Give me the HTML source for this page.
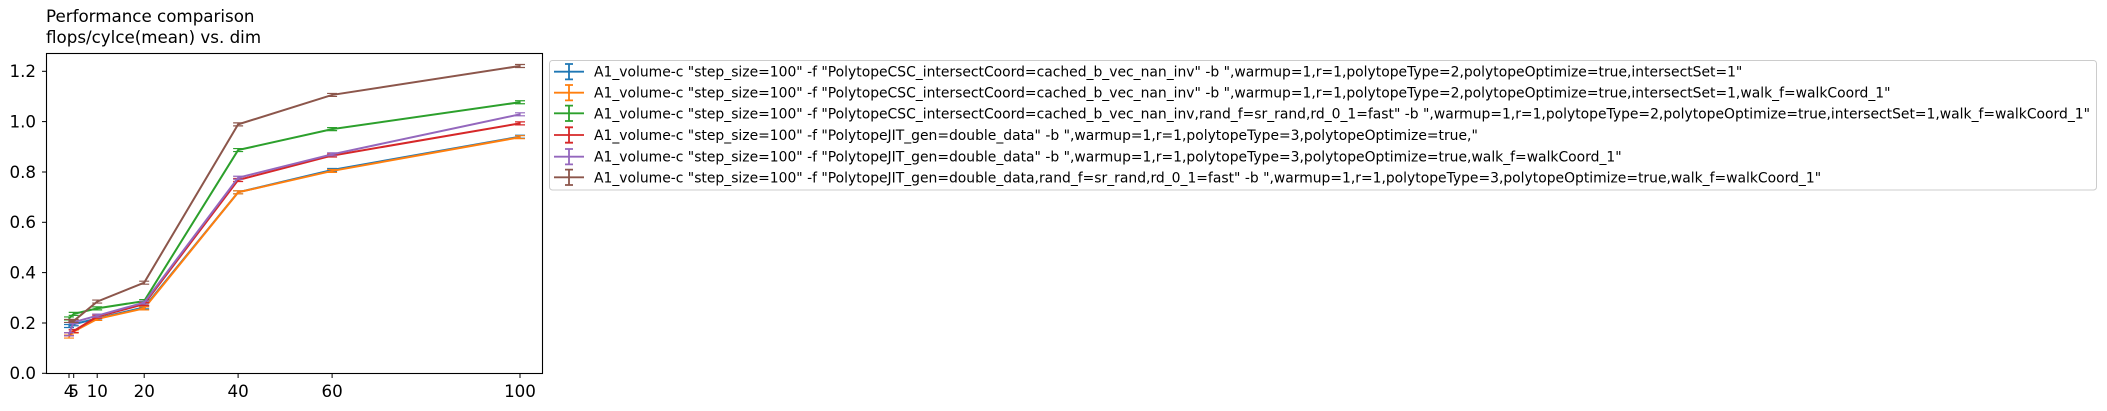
<!DOCTYPE html>
<html><head><meta charset="utf-8"><style>html,body{margin:0;padding:0;background:#fff;}svg{display:block}</style></head>
<body>
<svg id="s" width="2107" height="411" xmlns="http://www.w3.org/2000/svg" font-family="DejaVu Sans, Liberation Sans, sans-serif">
<rect width="2107" height="411" fill="#fff"/>
<text x="46" y="22" font-size="16.7">Performance comparison</text>
<text x="46" y="43" font-size="16.7">flops/cylce(mean) vs. dim</text>
<g id="plot"></g>
<rect x="46.5" y="53.5" width="496" height="320" fill="none" stroke="#000" stroke-width="1.1"/>
<g font-size="16.7" text-anchor="end">
<text x="36" y="379">0.0</text><text x="36" y="329">0.2</text><text x="36" y="278.5">0.4</text>
<text x="36" y="228">0.6</text><text x="36" y="178">0.8</text><text x="36" y="127.5">1.0</text><text x="36" y="77">1.2</text>
</g>
<g stroke="#000" stroke-width="1">
<line x1="42" x2="46" y1="373.3" y2="373.3"/><line x1="42" x2="46" y1="323" y2="323"/><line x1="42" x2="46" y1="272.6" y2="272.6"/><line x1="42" x2="46" y1="222.3" y2="222.3"/><line x1="42" x2="46" y1="172" y2="172"/><line x1="42" x2="46" y1="121.6" y2="121.6"/><line x1="42" x2="46" y1="71.3" y2="71.3"/>
<line x1="69" x2="69" y1="374" y2="378"/><line x1="73.7" x2="73.7" y1="374" y2="378"/><line x1="97.2" x2="97.2" y1="374" y2="378"/><line x1="144.2" x2="144.2" y1="374" y2="378"/><line x1="238.1" x2="238.1" y1="374" y2="378"/><line x1="332.1" x2="332.1" y1="374" y2="378"/><line x1="520" x2="520" y1="374" y2="378"/>
</g>
<g font-size="16.7" text-anchor="middle">
<text x="69" y="397">4</text><text x="73.7" y="397">5</text><text x="97.2" y="397">10</text><text x="144.2" y="397">20</text><text x="238.1" y="397">40</text><text x="332.1" y="397">60</text><text x="520" y="397">100</text>
</g>
<rect x="549.5" y="60.5" width="1547" height="129.5" rx="3" fill="#fff" fill-opacity="0.8" stroke="#ccc" stroke-width="1"/>
<g id="leg"></g>
<g font-size="13.9" fill="#000">
<text x="594" y="76.7">A1_volume-c "step_size=100" -f "PolytopeCSC_intersectCoord=cached_b_vec_nan_inv" -b ",warmup=1,r=1,polytopeType=2,polytopeOptimize=true,intersectSet=1"</text>
<text x="594" y="97.7">A1_volume-c "step_size=100" -f "PolytopeCSC_intersectCoord=cached_b_vec_nan_inv" -b ",warmup=1,r=1,polytopeType=2,polytopeOptimize=true,intersectSet=1,walk_f=walkCoord_1"</text>
<text x="594" y="118.3">A1_volume-c "step_size=100" -f "PolytopeCSC_intersectCoord=cached_b_vec_nan_inv,rand_f=sr_rand,rd_0_1=fast" -b ",warmup=1,r=1,polytopeType=2,polytopeOptimize=true,intersectSet=1,walk_f=walkCoord_1"</text>
<text x="594" y="140">A1_volume-c "step_size=100" -f "PolytopeJIT_gen=double_data" -b ",warmup=1,r=1,polytopeType=3,polytopeOptimize=true,"</text>
<text x="594" y="161.7">A1_volume-c "step_size=100" -f "PolytopeJIT_gen=double_data" -b ",warmup=1,r=1,polytopeType=3,polytopeOptimize=true,walk_f=walkCoord_1"</text>
<text x="594" y="182.3">A1_volume-c "step_size=100" -f "PolytopeJIT_gen=double_data,rand_f=sr_rand,rd_0_1=fast" -b ",warmup=1,r=1,polytopeType=3,polytopeOptimize=true,walk_f=walkCoord_1"</text>
</g>
<script>
var xs=[4,5,10,20,40,60,100];
var S=[["#1f77b4",[0.188,0.195,0.218,0.262,0.719,0.808,0.94]],
["#ff7f0e",[0.146,0.166,0.216,0.258,0.719,0.804,0.938]],
["#2ca02c",[0.218,0.236,0.258,0.287,0.887,0.97,1.077]],
["#d62728",[0.155,0.168,0.225,0.275,0.768,0.865,0.993]],
["#9467bd",[0.155,0.203,0.229,0.281,0.777,0.87,1.029]],
["#8c564b",[0.208,0.208,0.285,0.36,0.989,1.106,1.221]]];
var ns="http://www.w3.org/2000/svg",p=document.getElementById('plot'),lg=document.getElementById('leg');
function el(t,a,par){var e=document.createElementNS(ns,t);for(var k in a)e.setAttribute(k,a[k]);par.appendChild(e);return e;}
var ly=[71.7,92.7,113.3,135,156.7,177.3];
S.forEach(function(s,i){
 var pts=s[1].map(function(v,j){return [69+(xs[j]-4)*4.698,373.3-v*251.7];});
 el('polyline',{points:pts.map(function(q){return q.join(',')}).join(' '),fill:'none',stroke:s[0],'stroke-width':2},p);
 pts.forEach(function(q){el('path',{d:'M'+(q[0]-5)+','+(q[1]+1.5)+'h10M'+(q[0]-5)+','+(q[1]-1.5)+'h10M'+q[0]+','+(q[1]-1.5)+'v3',stroke:s[0],'stroke-width':1.2,fill:'none'},p);});
 var y=ly[i];
 el('path',{d:'M554,'+y+'h30M565,'+(y-7.7)+'h8M565,'+(y+7.7)+'h8M569,'+(y-7.7)+'v15.4',stroke:s[0],'stroke-width':1.8,fill:'none'},lg);
});
</script>
</svg>
</body></html>
